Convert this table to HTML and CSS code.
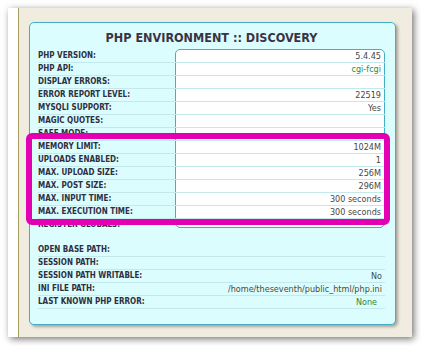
FILE: index.html
```html
<!DOCTYPE html>
<html>
<head>
<meta charset="utf-8">
<link rel="stylesheet" href="styles.css">
</head>
<body>
<div class="frame">
  <div class="strip"></div>
  <div class="canvas">
    <div class="panel">
      <div class="title">PHP ENVIRONMENT :: DISCOVERY</div>
      <div class="boxed">
        <div class="boxlayer"><div class="vbox"></div></div>
        <div class="rows">
          <div class="row"><span class="lab">PHP VERSION:</span><span class="val">5.4.45</span></div>
          <div class="row"><span class="lab">PHP API:</span><span class="val ok">cgi-fcgi</span></div>
          <div class="row"><span class="lab">DISPLAY ERRORS:</span><span class="val"></span></div>
          <div class="row"><span class="lab">ERROR REPORT LEVEL:</span><span class="val">22519</span></div>
          <div class="row"><span class="lab">MYSQLI SUPPORT:</span><span class="val">Yes</span></div>
          <div class="row"><span class="lab">MAGIC QUOTES:</span><span class="val"></span></div>
          <div class="row"><span class="lab">SAFE MODE:</span><span class="val"></span></div>
          <div class="row"><span class="lab">MEMORY LIMIT:</span><span class="val">1024M</span></div>
          <div class="row"><span class="lab">UPLOADS ENABLED:</span><span class="val">1</span></div>
          <div class="row"><span class="lab">MAX. UPLOAD SIZE:</span><span class="val">256M</span></div>
          <div class="row"><span class="lab">MAX. POST SIZE:</span><span class="val">296M</span></div>
          <div class="row"><span class="lab">MAX. INPUT TIME:</span><span class="val">300 seconds</span></div>
          <div class="row"><span class="lab">MAX. EXECUTION TIME:</span><span class="val">300 seconds</span></div>
          <div class="row last"><span class="lab">REGISTER GLOBALS:</span><span class="val"></span></div>
        </div>
      </div>
      <div class="rows plain">
        <div class="row"><span class="lab">OPEN BASE PATH:</span><span class="val"></span></div>
        <div class="row"><span class="lab">SESSION PATH:</span><span class="val"></span></div>
        <div class="row"><span class="lab">SESSION PATH WRITABLE:</span><span class="val">No</span></div>
        <div class="row"><span class="lab">INI FILE PATH:</span><span class="val path">/home/theseventh/public_html/php.ini</span></div>
        <div class="row"><span class="lab">LAST KNOWN PHP ERROR:</span><span class="val ok none">None</span></div>
      </div>
    </div>
  </div>
  <div class="highlight"></div>
</div>
</body>
</html>
```

FILE: styles.css
```css
html, body {
  margin: 0;
  padding: 0;
  background: #ffffff;
}
body {
  width: 421px;
  height: 346px;
  overflow: hidden;
  font-family: "DejaVu Sans Condensed", "DejaVu Sans", sans-serif;
  font-stretch: condensed;
}
.frame {
  position: relative;
  margin: 8px 9px 9px 8px;
  width: 404px;
  height: 329px;
  display: flex;
  box-shadow: 2px 2px 7px rgba(0, 0, 0, 0.55);
}
.strip {
  width: 10px;
  background: #ffffff;
  border-right: 1px solid #a69d5c;
}
.canvas {
  flex: 1;
  background: #f1ece0;
  padding: 14px 16px 13px 10px;
}
.panel {
  background: #dcfdfd;
  border: 1px solid #45aec6;
  border-radius: 5px;
  box-shadow: 2px 2px 3px rgba(0, 0, 0, 0.3);
  padding: 0 10px 15px 8px;
}
.title {
  padding-top: 7px;
  height: 16px;
  line-height: 16px;
  margin-bottom: 4px;
  text-align: center;
  font-weight: bold;
  font-size: 12.5px;
  color: #3a3346;
}
.boxed {
  display: grid;
}
.boxlayer, .boxed > .rows {
  grid-area: 1 / 1;
}
.boxlayer {
  display: flex;
  padding-left: 137px;
  padding-bottom: 4px;
  margin-top: -1px;
}
.vbox {
  flex: 1;
  background: #ffffff;
  border: 1px solid #45aec6;
  border-radius: 5px;
}
.rows {
  position: relative;
  display: flex;
  flex-direction: column;
}
.row {
  display: flex;
  box-sizing: border-box;
  height: 13px;
  line-height: 12px;
  border-bottom: 1px solid #c3e9ec;
  white-space: nowrap;
}
.row.last {
  border-bottom-color: transparent;
}
.lab {
  width: 137px;
  flex: none;
  font-weight: bold;
  font-size: 8px;
  color: #2f2f42;
}
.val {
  flex: 1;
  text-align: right;
  padding-right: 4px;
  font-size: 9px;
  color: #4a4545;
}
.plain {
  margin-top: 12px;
}
.plain .val {
  padding-right: 3px;
}
.val.ok {
  color: #2f8a2f;
}
.val.path {
  color: #4d4838;
}
.plain .val.none {
  padding-right: 8px;
}
.highlight {
  position: absolute;
  left: 18px;
  top: 125px;
  width: 352px;
  height: 80px;
  border: 6px solid #e300b3;
  border-radius: 6px;
}
```
